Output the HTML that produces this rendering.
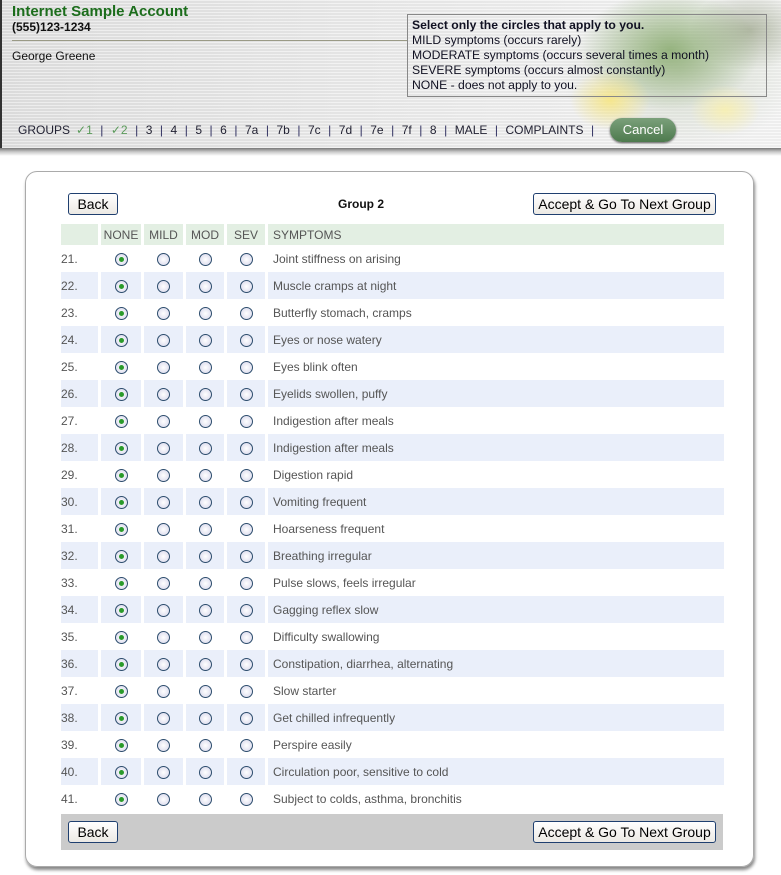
<!DOCTYPE html>
<html><head><meta charset="utf-8"><style>
*{margin:0;padding:0;box-sizing:border-box}
body{width:781px;height:875px;background:#fff;font-family:"Liberation Sans",Arial,sans-serif;position:relative;overflow:hidden}
#hdr{position:absolute;left:0;top:0;width:781px;height:150px;border-left:2px solid #333;
background:repeating-linear-gradient(180deg,rgba(255,255,255,.35) 0 1px,rgba(0,0,0,.03) 1px 3px),linear-gradient(90deg,#e2e2e2,#ececec 50%,#f6f6f6);}
#herb{position:absolute;left:540px;top:0;width:241px;height:150px;
background:radial-gradient(ellipse 40px 30px at 70px 100px,rgba(250,230,120,.8),transparent),radial-gradient(ellipse 35px 25px at 185px 110px,rgba(250,240,170,.8),transparent),radial-gradient(ellipse 90px 60px at 130px 50px,rgba(120,160,90,.7),transparent),radial-gradient(ellipse 60px 40px at 210px 30px,rgba(140,150,120,.6),transparent),radial-gradient(ellipse 120px 80px at 140px 70px,rgba(200,210,190,.7),transparent)}
#shadow{position:absolute;left:0;top:148px;width:781px;height:8px;background:linear-gradient(#777,#ccc 50%,#fff)}
.t1{position:absolute;left:12px;top:3px;color:#1c6d1c;font-weight:bold;font-size:15px}
.t2{position:absolute;left:12px;top:20px;color:#111;font-weight:bold;font-size:12px}
.hl{position:absolute;left:12px;top:40px;width:395px;height:1px;background:#9a9a86}
.t3{position:absolute;left:12px;top:49px;color:#111;font-size:12px}
#info{position:absolute;left:407px;top:14px;width:360px;height:83px;border:1px solid #888;padding:3px 0 0 4px;font-size:12.2px;line-height:15px;color:#112}
#nav{position:absolute;left:18px;top:123px;font-size:12px;color:#223;white-space:nowrap}
#nav span.s{color:#303060;margin:0 7.5px}
#nav .ck{color:#5a9a5a;margin-left:6px}
#cancel{position:absolute;left:610px;top:118px;width:66px;height:24px;border-radius:12px;background:linear-gradient(#7ba07b,#4d7a4d);color:#fff;font-size:13px;text-align:center;line-height:24px;box-shadow:0 1px 2px #555}
#panel{position:absolute;left:25px;top:171px;width:729px;height:696px;border:1px solid #aaa;border-radius:12px;box-shadow:1px 3px 3px #888}
.btn{position:absolute;height:22px;border:1px solid #1f3f6f;border-radius:3px;background:linear-gradient(#fff,#ece9e4);font-size:14px;line-height:20px;text-align:center;color:#000}
table{position:absolute;left:61px;top:224px;border-collapse:separate;border-spacing:3px 0;margin-left:-3px;font-size:12px;color:#555}
td{height:27px;padding:0}
thead td{height:21px;background:#e3efe3;text-align:center;color:#555}
tr.a td{background:#eaeffa}
td.n{width:37px;padding-left:0;color:#555}
td.r{width:40px;text-align:center}
td.r2{width:39px;text-align:center}
td.r3{width:38px;text-align:center}
td.s{width:456px;padding-left:5px}
.rd{display:inline-block;width:13px;height:13px;border:1px solid #2d4d6d;border-radius:50%;background:radial-gradient(#fff,#dde 80%);vertical-align:middle;position:relative}
.rd.on::after{content:"";position:absolute;left:3px;top:3px;width:5px;height:5px;border-radius:50%;background:#2a9a2a}
#foot{position:absolute;left:61px;top:814px;width:662px;height:36px;background:#cbcbcb}
</style></head><body>
<div id="hdr"></div><div id="herb"></div><div id="shadow"></div>
<div class="t1">Internet Sample Account</div>
<div class="t2">(555)123-1234</div>
<div class="hl"></div>
<div class="t3">George Greene</div>
<div id="info"><b>Select only the circles that apply to you.</b><br>MILD symptoms (occurs rarely)<br>MODERATE symptoms (occurs several times a month)<br>SEVERE symptoms (occurs almost constantly)<br>NONE - does not apply to you.</div>
<div id="nav">GROUPS<span class="ck">✓1</span><span class="s">|</span><span class="ck" style="margin-left:0">✓2</span><span class="s">|</span>3<span class="s">|</span>4<span class="s">|</span>5<span class="s">|</span>6<span class="s">|</span>7a<span class="s">|</span>7b<span class="s">|</span>7c<span class="s">|</span>7d<span class="s">|</span>7e<span class="s">|</span>7f<span class="s">|</span>8<span class="s">|</span>MALE<span class="s">|</span>COMPLAINTS<span class="s">|</span></div>
<div id="cancel">Cancel</div>
<div id="panel"></div>
<div class="btn" style="left:68px;top:193px;width:50px">Back</div>
<div style="position:absolute;left:338px;top:197px;font-size:12px;font-weight:bold;color:#111">Group 2</div>
<div class="btn" style="left:533px;top:193px;width:183px">Accept &amp; Go To Next Group</div>
<table>
<thead><tr><td class="n"></td><td class="r">NONE</td><td class="r2">MILD</td><td class="r3">MOD</td><td class="r3">SEV</td><td class="s" style="text-align:left">SYMPTOMS</td></tr></thead>
<tbody>
<tr><td class="n">21.</td><td class="r"><i class="rd on"></i></td><td class="r2"><i class="rd"></i></td><td class="r3"><i class="rd"></i></td><td class="r3"><i class="rd"></i></td><td class="s">Joint stiffness on arising</td></tr>
<tr class="a"><td class="n">22.</td><td class="r"><i class="rd on"></i></td><td class="r2"><i class="rd"></i></td><td class="r3"><i class="rd"></i></td><td class="r3"><i class="rd"></i></td><td class="s">Muscle cramps at night</td></tr>
<tr><td class="n">23.</td><td class="r"><i class="rd on"></i></td><td class="r2"><i class="rd"></i></td><td class="r3"><i class="rd"></i></td><td class="r3"><i class="rd"></i></td><td class="s">Butterfly stomach, cramps</td></tr>
<tr class="a"><td class="n">24.</td><td class="r"><i class="rd on"></i></td><td class="r2"><i class="rd"></i></td><td class="r3"><i class="rd"></i></td><td class="r3"><i class="rd"></i></td><td class="s">Eyes or nose watery</td></tr>
<tr><td class="n">25.</td><td class="r"><i class="rd on"></i></td><td class="r2"><i class="rd"></i></td><td class="r3"><i class="rd"></i></td><td class="r3"><i class="rd"></i></td><td class="s">Eyes blink often</td></tr>
<tr class="a"><td class="n">26.</td><td class="r"><i class="rd on"></i></td><td class="r2"><i class="rd"></i></td><td class="r3"><i class="rd"></i></td><td class="r3"><i class="rd"></i></td><td class="s">Eyelids swollen, puffy</td></tr>
<tr><td class="n">27.</td><td class="r"><i class="rd on"></i></td><td class="r2"><i class="rd"></i></td><td class="r3"><i class="rd"></i></td><td class="r3"><i class="rd"></i></td><td class="s">Indigestion after meals</td></tr>
<tr class="a"><td class="n">28.</td><td class="r"><i class="rd on"></i></td><td class="r2"><i class="rd"></i></td><td class="r3"><i class="rd"></i></td><td class="r3"><i class="rd"></i></td><td class="s">Indigestion after meals</td></tr>
<tr><td class="n">29.</td><td class="r"><i class="rd on"></i></td><td class="r2"><i class="rd"></i></td><td class="r3"><i class="rd"></i></td><td class="r3"><i class="rd"></i></td><td class="s">Digestion rapid</td></tr>
<tr class="a"><td class="n">30.</td><td class="r"><i class="rd on"></i></td><td class="r2"><i class="rd"></i></td><td class="r3"><i class="rd"></i></td><td class="r3"><i class="rd"></i></td><td class="s">Vomiting frequent</td></tr>
<tr><td class="n">31.</td><td class="r"><i class="rd on"></i></td><td class="r2"><i class="rd"></i></td><td class="r3"><i class="rd"></i></td><td class="r3"><i class="rd"></i></td><td class="s">Hoarseness frequent</td></tr>
<tr class="a"><td class="n">32.</td><td class="r"><i class="rd on"></i></td><td class="r2"><i class="rd"></i></td><td class="r3"><i class="rd"></i></td><td class="r3"><i class="rd"></i></td><td class="s">Breathing irregular</td></tr>
<tr><td class="n">33.</td><td class="r"><i class="rd on"></i></td><td class="r2"><i class="rd"></i></td><td class="r3"><i class="rd"></i></td><td class="r3"><i class="rd"></i></td><td class="s">Pulse slows, feels irregular</td></tr>
<tr class="a"><td class="n">34.</td><td class="r"><i class="rd on"></i></td><td class="r2"><i class="rd"></i></td><td class="r3"><i class="rd"></i></td><td class="r3"><i class="rd"></i></td><td class="s">Gagging reflex slow</td></tr>
<tr><td class="n">35.</td><td class="r"><i class="rd on"></i></td><td class="r2"><i class="rd"></i></td><td class="r3"><i class="rd"></i></td><td class="r3"><i class="rd"></i></td><td class="s">Difficulty swallowing</td></tr>
<tr class="a"><td class="n">36.</td><td class="r"><i class="rd on"></i></td><td class="r2"><i class="rd"></i></td><td class="r3"><i class="rd"></i></td><td class="r3"><i class="rd"></i></td><td class="s">Constipation, diarrhea, alternating</td></tr>
<tr><td class="n">37.</td><td class="r"><i class="rd on"></i></td><td class="r2"><i class="rd"></i></td><td class="r3"><i class="rd"></i></td><td class="r3"><i class="rd"></i></td><td class="s">Slow starter</td></tr>
<tr class="a"><td class="n">38.</td><td class="r"><i class="rd on"></i></td><td class="r2"><i class="rd"></i></td><td class="r3"><i class="rd"></i></td><td class="r3"><i class="rd"></i></td><td class="s">Get chilled infrequently</td></tr>
<tr><td class="n">39.</td><td class="r"><i class="rd on"></i></td><td class="r2"><i class="rd"></i></td><td class="r3"><i class="rd"></i></td><td class="r3"><i class="rd"></i></td><td class="s">Perspire easily</td></tr>
<tr class="a"><td class="n">40.</td><td class="r"><i class="rd on"></i></td><td class="r2"><i class="rd"></i></td><td class="r3"><i class="rd"></i></td><td class="r3"><i class="rd"></i></td><td class="s">Circulation poor, sensitive to cold</td></tr>
<tr><td class="n">41.</td><td class="r"><i class="rd on"></i></td><td class="r2"><i class="rd"></i></td><td class="r3"><i class="rd"></i></td><td class="r3"><i class="rd"></i></td><td class="s">Subject to colds, asthma, bronchitis</td></tr>
</tbody></table>
<div id="foot"></div>
<div class="btn" style="left:68px;top:821px;width:50px">Back</div>
<div class="btn" style="left:533px;top:821px;width:183px">Accept &amp; Go To Next Group</div>
</body></html>
